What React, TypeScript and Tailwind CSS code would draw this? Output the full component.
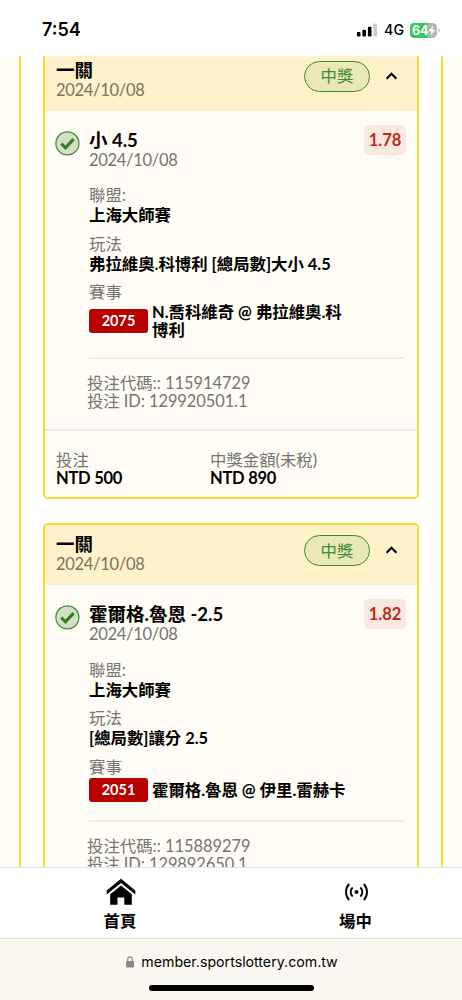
type Bet = {
  pick: string;
  odds: string;
  play: string;
  no: string;
  match: string;
  code: string;
  id: string;
  stake: string;
  payout: string;
  wrap: boolean;
};

const date = "2024/10/08";

const bets: Bet[] = [
  {
    pick: "小 4.5",
    odds: "1.78",
    play: "弗拉維奧.科博利 [總局數]大小 4.5",
    no: "2075",
    match: "N.喬科維奇 @ 弗拉維奧.科博利",
    code: "115914729",
    id: "129920501.1",
    stake: "NTD 500",
    payout: "NTD 890",
    wrap: true,
  },
  {
    pick: "霍爾格.魯恩 -2.5",
    odds: "1.82",
    play: "[總局數]讓分 2.5",
    no: "2051",
    match: "霍爾格.魯恩 @ 伊里.雷赫卡",
    code: "115889279",
    id: "129892650.1",
    stake: "NTD 500",
    payout: "NTD 910",
    wrap: false,
  },
];

function StatusBar() {
  return (
    <header className="flex h-14 shrink-0 items-start justify-between bg-white pl-[42px] pr-[22px] font-['Inter',sans-serif]">
      <span className="mt-[19px] text-[18px] leading-[22px] font-semibold">7:54</span>
      <div className="mt-[19px] flex h-[22px] items-center">
        <svg className="mr-[7px] h-[14px] w-[21px]" viewBox="0 0 21 14">
          <rect x="0.9" y="9" width="3.6" height="4.6" rx="1" />
          <rect x="6.4" y="6.8" width="3.6" height="6.8" rx="1" />
          <rect x="11.9" y="3.8" width="3.6" height="9.8" rx="1" />
          <rect x="17.4" y="0.4" width="3.6" height="13.2" rx="1" fill="#cbcbcb" />
        </svg>
        <span className="mr-[6px] text-[14.2px] font-medium">4G</span>
        <svg className="h-[15px] w-[30px]" viewBox="0 0 30 15">
          <defs>
            <clipPath id="cell">
              <rect width="27" height="15" rx="4.6" />
            </clipPath>
          </defs>
          <g clipPath="url(#cell)">
            <rect width="27" height="15" fill="#b5b5b7" />
            <rect width="17.5" height="15" fill="#34c759" />
          </g>
          <path d="M28.3 5.3c1 .4 1.5 1.2 1.5 2.2s-.5 1.8-1.5 2.2z" fill="#b5b5b7" />
          <text x="2" y="12" fontSize="12.5" fontWeight="700" fill="#fff">64</text>
          <path d="M23.2 2.6l-4.7 5.6h3l-.9 4.4 4.8-5.8h-3z" fill="#fff" />
        </svg>
      </div>
    </header>
  );
}

function CheckBadge() {
  return (
    <svg className="mt-[20px] h-[25px] w-[25px] shrink-0" viewBox="0 0 25 25">
      <circle cx="12.4" cy="12.4" r="11.5" fill="#d5dfc8" stroke="#3f8a33" strokeWidth="1.2" />
      <path d="M6.3 12.7l4.2 4.1 8.1-8.7" fill="none" stroke="#31801f" strokeWidth="3.1" />
    </svg>
  );
}

function Field({ label, value }: { label: string; value: string }) {
  return (
    <div className="h-[48.5px]">
      <p className="leading-5 text-[#757571]">{label}</p>
      <p className="leading-5 font-bold">{value}</p>
    </div>
  );
}

function BetCard({ bet }: { bet: Bet }) {
  return (
    <article className="shrink-0 overflow-hidden rounded-[5px] border-2 border-[#ffd92b] bg-[#fffdf5]">
      <div className="flex h-[60.5px] items-center bg-[#fff1ca] pl-[11px] pr-[19px]">
        <div className="flex-1">
          <p className="text-[18.5px] leading-5 font-bold">一關</p>
          <p className="text-[16.5px] leading-[21px] tracking-[-0.3px] text-[#7a7361]">{date}</p>
        </div>
        <span className="mr-[15px] mt-[-8px] flex h-[31px] w-[66px] items-center justify-center rounded-full border border-[#3f8a33] bg-[#eae8b9] pt-px text-[#3f8a33]">
          中獎
        </span>
        <svg className="mt-[-9px] h-[14px] w-[13px]" viewBox="0 0 13 14">
          <path d="M1.6 9.7l4.9-5 4.9 5" fill="none" stroke="#000" strokeWidth="2" />
        </svg>
      </div>

      <div className="flex pl-[10px] pr-[11px]">
        <CheckBadge />
        <div className="ml-[9px] flex-1 pt-[19px]">
          <div className="flex h-[55.5px]">
            <div className="flex-1">
              <p className="text-[18.5px] leading-5 font-bold">{bet.pick}</p>
              <p className="text-[16.5px] leading-[21px] tracking-[-0.3px] text-[#757571]">{date}</p>
            </div>
            <span className="-mt-[5px] flex h-[30px] w-[42px] items-center justify-center rounded-[5px] bg-[#f8e8e0] pt-px text-[16.5px] font-bold text-[#c0271c]">
              {bet.odds}
            </span>
          </div>
          <Field label="聯盟:" value="上海大師賽" />
          <Field label="玩法" value={bet.play} />
          <p className="leading-5 text-[#757571]">賽事</p>
          <div className={bet.wrap ? "flex h-[38px] items-center" : "flex h-[27px] items-center"}>
            <span className="mr-[4px] flex h-6 w-[59px] items-center justify-center rounded-[3px] bg-[#b80000] text-[14.5px] font-bold text-white">
              {bet.no}
            </span>
            <p className="w-[200px] leading-[18px] font-bold">{bet.match}</p>
          </div>
          <hr className="mt-[16.5px] mr-[2px] border-t-2 border-[#efede6]" />
          <div className="-ml-[2px] mt-[15px] leading-[18px] text-[#757571]">
            <p>投注代碼:: {bet.code}</p>
            <p className="tracking-[-0.05px]">投注 ID: {bet.id}</p>
          </div>
        </div>
      </div>

      <div className="mt-[19px] flex h-[68px] border-t-2 border-[#eeece6] pl-[11px] pt-[20px]">
        <div className="w-[154px]">
          <p className="leading-[18px] text-[#757571]">投注</p>
          <p className="text-[16.5px] leading-[18px] font-bold tracking-[-0.25px]">{bet.stake}</p>
        </div>
        <div>
          <p className="leading-[18px] text-[#757571]">中獎金額(未稅)</p>
          <p className="text-[16.5px] leading-[18px] font-bold tracking-[-0.25px]">{bet.payout}</p>
        </div>
      </div>
    </article>
  );
}

function TabBar() {
  return (
    <nav className="grid h-[71px] shrink-0 grid-cols-[240px_1fr] border-t border-[#e4e4e0] bg-white text-[16.4px] font-bold">
      <div className="flex flex-col items-center pt-[10px]">
        <svg className="ml-[2px] h-[28px] w-[30px]" viewBox="0 0 30 28">
          <path d="M.7 12.6L15 .8l14.3 11.8v4L15 4.9.7 16.6z" />
          <path d="M4.2 16.2L15 7.4l10.8 8.8v10.5h-7.5v-7.2h-6.8v7.2H4.2z" />
        </svg>
        <span className="mt-[5px] leading-5">首頁</span>
      </div>
      <div className="flex flex-col items-center pt-[10px] pl-[9px]">
        <svg className="h-[28px] w-[24px]" viewBox="0 0 24 28" fill="none" stroke="#000" strokeWidth="1.9">
          <circle cx="12.5" cy="14" r="2" fill="#000" stroke="none" />
          <path d="M8.7 9.5a6 6 0 0 0 0 9M16.3 9.5a6 6 0 0 1 0 9" />
          <path d="M5.2 6a11.5 11.5 0 0 0 0 16M19.8 6a11.5 11.5 0 0 1 0 16" />
        </svg>
        <span className="mt-[5px] leading-5">場中</span>
      </div>
    </nav>
  );
}

function AddressBar() {
  return (
    <footer className="flex h-[62px] shrink-0 flex-col items-center border-t border-[#e0dfdb] bg-[#faf8f1] font-['Inter',sans-serif]">
      <div className="mt-[13px] ml-[2px] flex h-5 items-center gap-[7px] text-[14.2px]">
        <svg className="h-[12px] w-[8px]" viewBox="0 0 8 12">
          <rect y="5" width="8" height="6.5" rx="1.2" fill="#898984" />
          <path d="M1.7 6V3.2a2.3 2.3 0 0 1 4.6 0V6" fill="none" stroke="#898984" strokeWidth="1.2" />
        </svg>
        <span>member.sportslottery.com.tw</span>
      </div>
      <div className="mt-[13px] h-[6px] w-[165px] rounded-full bg-black" />
    </footer>
  );
}

export default function App() {
  return (
    <div className="flex h-[1000px] w-[462px] flex-col overflow-hidden bg-white font-['Lato','Noto_Sans_CJK_TC',sans-serif] text-[16.4px] text-black">
      <StatusBar />
      <main className="h-[811px] shrink-0 overflow-hidden bg-[#fffdf5] px-[19px]">
        <div className="flex h-full flex-col border-x-2 border-[#ffd92b] bg-white px-[22px]">
          <div className="-mt-[8px] flex flex-col gap-6">
            {bets.map((bet) => (
              <BetCard key={bet.id} bet={bet} />
            ))}
          </div>
        </div>
      </main>
      <TabBar />
      <AddressBar />
    </div>
  );
}
